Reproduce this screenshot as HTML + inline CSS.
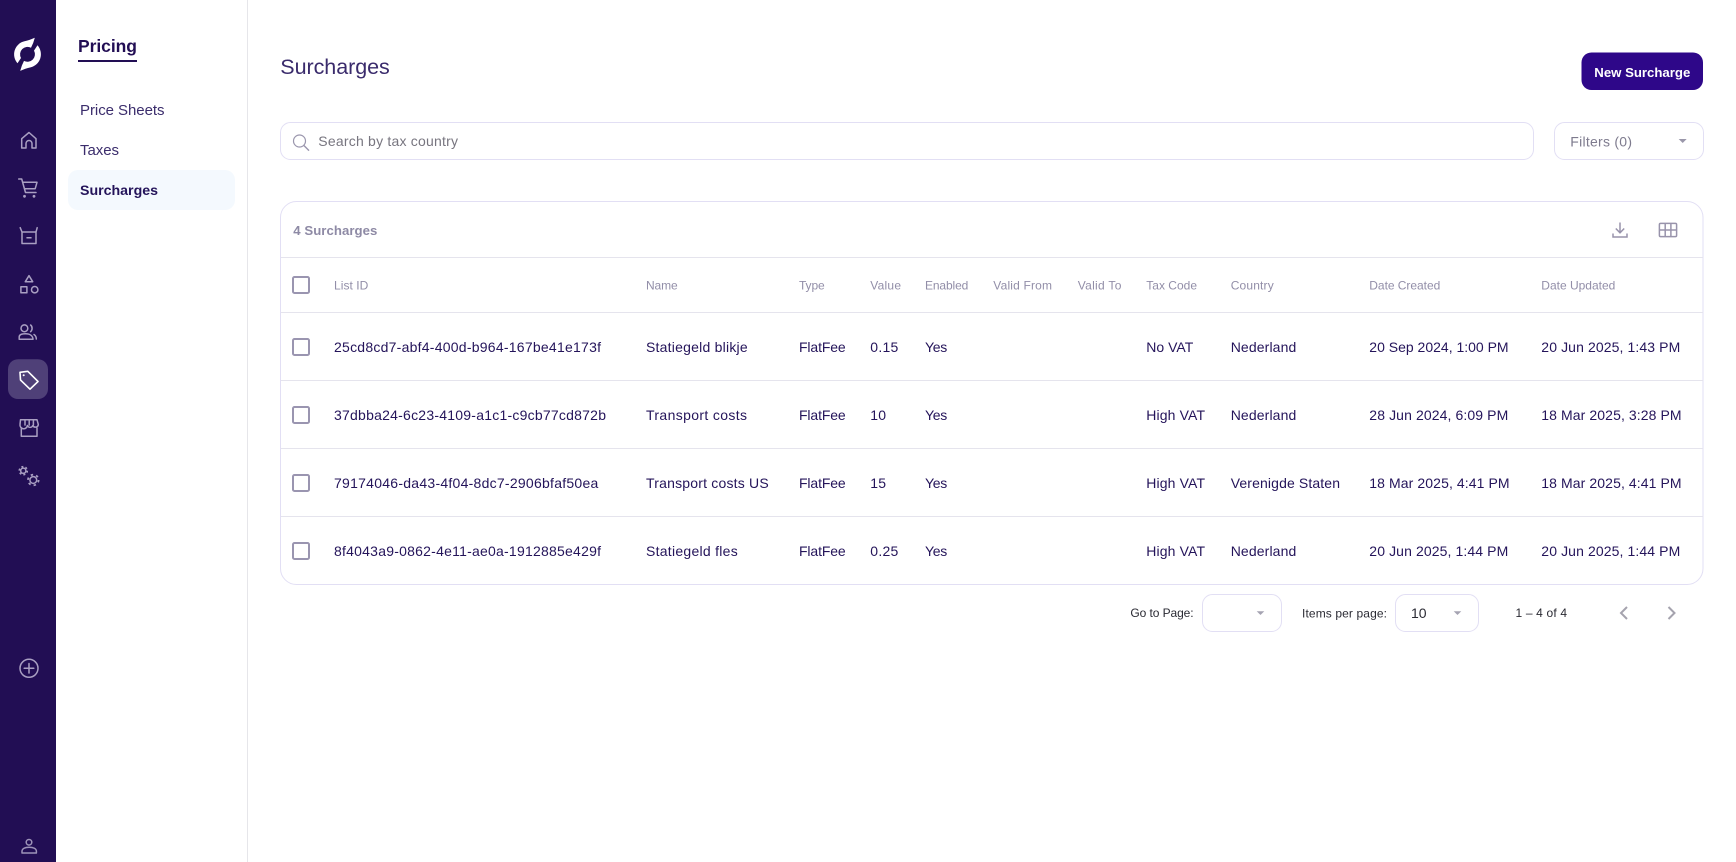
<!DOCTYPE html>
<html lang="en">
<head>
<meta charset="utf-8">
<title>Surcharges</title>
<style>
html,body{margin:0;padding:0;background:#fff;overflow:hidden}
svg{display:block}
text{font-family:"Liberation Sans",sans-serif;white-space:pre}
.d{font-size:14px;fill:#24145a}
.h{font-size:12px;fill:#928ea8}
.ic{fill:none;stroke:#a99fc2;stroke-width:1.5;stroke-linecap:round;stroke-linejoin:round}
.box{fill:#fff;stroke:#e2dff4;stroke-width:1}
.ln{stroke:#e5e4ed;stroke-width:1}
.cb{fill:#fff;stroke:#9a95b0;stroke-width:2}
.p{font-size:12px;fill:#2a2a33}
</style>
</head>
<body>
<svg xmlns="http://www.w3.org/2000/svg" width="1736" height="862" viewBox="0 0 1736 862">
<rect width="1736" height="862" fill="#fff"/>

<!-- rail -->
<rect width="56" height="862" fill="#220e54"/>
<g fill="#fff">
<path d="M34.8 37.7C31 39.5 28 40.3 24.5 41.2A13.5 13.5 0 0 0 17.5 63.3L21 58A7.5 7.5 0 0 1 31 47.7Q33.5 43 34.8 37.7Z"/>
<path d="M34.8 37.7C31 39.5 28 40.3 24.5 41.2A13.5 13.5 0 0 0 17.5 63.3L21 58A7.5 7.5 0 0 1 31 47.7Q33.5 43 34.8 37.7Z" transform="rotate(180 27.5 54.3)"/>
</g>
<g class="ic">
<path d="M21.7 148V138.7L29 132.5L36 138.7V148H32V143.5A3 3 0 0 0 26 143.5V148Z"/>
<path d="M18.7 179H21.7L25.5 192.5H36"/>
<path d="M23 182.3H37L35.2 188.7H25"/>
<path d="M22 232H36V243.5H22ZM20.2 227.7L22 232M37.2 227.7L36 232M27 237.7H31"/>
<path d="M29 275.7L32.7 281.7H25.3Z"/>
<rect x="20.9" y="286.7" width="6" height="6"/>
<circle cx="34.7" cy="289.7" r="3.2"/>
<circle cx="24.4" cy="328.3" r="3.4"/>
<path d="M19.2 339.3V337C19.2 335 21.5 333.8 25.5 333.8C29.5 333.8 32.8 335.5 33 339.3Z"/>
<path d="M30.6 325C32.6 326.5 32.6 330 30.6 331.7"/>
<path d="M34 334.5C35.5 335.5 36.3 337 36.3 339"/>
<path d="M20.5 419.8H37L38.3 424.5A2.9 2.9 0 0 1 32.8 425.5A2.9 2.9 0 0 1 27.4 425.5A2.9 2.9 0 0 1 20 424.5ZM21.3 428V436.2H37V428M25 420V425M29.2 420V425M33.4 420V425"/>
<circle cx="23.3" cy="470.7" r="2.6"/>
<circle cx="23.3" cy="470.7" r="4" stroke-dasharray="2 2.19" stroke-linecap="butt" stroke-width="1.6"/>
<circle cx="33.3" cy="480" r="3.4"/>
<circle cx="33.3" cy="480" r="5.3" stroke-dasharray="2.4 3.15" stroke-linecap="butt" stroke-width="1.8"/>
<circle cx="29" cy="668.3" r="9"/>
<path d="M29 663.5V673M24.2 668.3H33.8"/>
<circle cx="29" cy="842.3" r="2.8" stroke="#9d93b8"/>
<path d="M22 853V851.3C22 848.7 25 847.2 29.2 847.2C33.4 847.2 36.4 848.7 36.4 851.3V853Z" stroke="#9d93b8"/>
</g>
<g fill="#a99fc2"><circle cx="24.5" cy="196.3" r="1.4"/><circle cx="34" cy="196.3" r="1.4"/></g>
<rect x="8" y="359.2" width="40" height="39.8" rx="10" fill="#4f4078"/>
<path d="M20 372.3L27.8 371.3L38 381.5L30 389.2L20.5 380Z" fill="none" stroke="#fff" stroke-width="1.6" stroke-linejoin="round"/>
<circle cx="23.7" cy="375.2" r="1" fill="#fff"/>

<!-- secondary nav -->
<rect x="247" y="0" width="1" height="862" fill="#e6e6ea"/>
<text x="78" y="52" font-size="17.5" font-weight="700" fill="#220e54" textLength="59" lengthAdjust="spacing">Pricing</text>
<rect x="78" y="60" width="59" height="2" fill="#220e54"/>
<text x="80" y="115" font-size="15" fill="#3b2d6c" textLength="84.5" lengthAdjust="spacing">Price Sheets</text>
<text x="80" y="155" font-size="15" fill="#3b2d6c" textLength="39" lengthAdjust="spacing">Taxes</text>
<rect x="68" y="170" width="167" height="40" rx="10" fill="#f4f9fe"/>
<text x="80" y="195" font-size="14.2" font-weight="700" fill="#24145a" textLength="78" lengthAdjust="spacing">Surcharges</text>

<!-- header -->
<text x="280.3" y="74" font-size="21.5" fill="#3a2b6c" textLength="109.5" lengthAdjust="spacing">Surcharges</text>
<rect x="1581.5" y="52.5" width="121.5" height="37.5" rx="10" fill="#2e0789"/>
<text x="1594.3" y="77" font-size="13.2" font-weight="700" fill="#fff" textLength="96" lengthAdjust="spacing">New Surcharge</text>

<!-- search + filter -->
<rect class="box" x="280.5" y="122.5" width="1253" height="37" rx="10"/>
<circle cx="299.5" cy="141" r="6" fill="none" stroke="#9a96ad" stroke-width="1.2"/>
<path d="M303.8 145.4L309 150.6" stroke="#9a96ad" stroke-width="1.4" fill="none"/>
<text x="318.3" y="146" font-size="14" fill="#77757f" textLength="139.7" lengthAdjust="spacing">Search by tax country</text>
<rect class="box" x="1554.5" y="122.5" width="149" height="37" rx="10"/>
<text x="1570.3" y="146.3" font-size="14" fill="#7e7b8e" textLength="61.7" lengthAdjust="spacing">Filters (0)</text>
<path d="M1678.7 139H1686.7L1682.7 143Z" fill="#9a97aa"/>

<!-- card -->
<rect class="box" x="280.5" y="201.5" width="1422.5" height="383" rx="16"/>
<text x="293.3" y="235" font-size="13.2" font-weight="700" fill="#8e8aa5" textLength="84" lengthAdjust="spacing">4 Surcharges</text>
<g fill="none" stroke="#9893ab" stroke-width="1.5">
<path d="M1620 222.5V232.5M1615.8 228.5L1620 232.8L1624.2 228.5"/>
<path d="M1613 233.5V237H1627V233.5"/>
<rect x="1659.4" y="223.4" width="17.2" height="13.2" rx="1.2"/>
<path d="M1665.2 223.4V236.6M1670.9 223.4V236.6M1659.4 230H1676.6"/>
</g>
<path class="ln" d="M281 257.5H1703M281 312.5H1703M281 380.5H1703M281 448.5H1703M281 516.5H1703"/>

<!-- table head -->
<rect class="cb" x="293" y="277" width="16" height="16" rx="1.5"/>
<text class="h" x="334" y="289.3" textLength="34.3" lengthAdjust="spacing">List ID</text>
<text class="h" x="646" y="289.3" textLength="31.7" lengthAdjust="spacing">Name</text>
<text class="h" x="799" y="289.3" textLength="25.7" lengthAdjust="spacing">Type</text>
<text class="h" x="870.3" y="289.3" textLength="30.7" lengthAdjust="spacing">Value</text>
<text class="h" x="925" y="289.3" textLength="43.3" lengthAdjust="spacing">Enabled</text>
<text class="h" x="993.3" y="289.3" textLength="58.7" lengthAdjust="spacing">Valid From</text>
<text class="h" x="1077.7" y="289.3" textLength="43.7" lengthAdjust="spacing">Valid To</text>
<text class="h" x="1146.3" y="289.3" textLength="50.7" lengthAdjust="spacing">Tax Code</text>
<text class="h" x="1230.7" y="289.3" textLength="43" lengthAdjust="spacing">Country</text>
<text class="h" x="1369.3" y="289.3" textLength="71" lengthAdjust="spacing">Date Created</text>
<text class="h" x="1541.3" y="289.3" textLength="74" lengthAdjust="spacing">Date Updated</text>

<!-- row 1 -->
<rect class="cb" x="293" y="339" width="16" height="16" rx="1.5"/>
<text class="d" x="334" y="352" textLength="267" lengthAdjust="spacing">25cd8cd7-abf4-400d-b964-167be41e173f</text>
<text class="d" x="646" y="352" textLength="101.7" lengthAdjust="spacing">Statiegeld blikje</text>
<text class="d" x="799" y="352" textLength="46.7" lengthAdjust="spacing">FlatFee</text>
<text class="d" x="870.3" y="352" textLength="28" lengthAdjust="spacing">0.15</text>
<text class="d" x="925" y="352" textLength="22.3" lengthAdjust="spacing">Yes</text>
<text class="d" x="1146.3" y="352" textLength="47" lengthAdjust="spacing">No VAT</text>
<text class="d" x="1230.7" y="352" textLength="65.6" lengthAdjust="spacing">Nederland</text>
<text class="d" x="1369.3" y="352" textLength="139.3" lengthAdjust="spacing">20 Sep 2024, 1:00 PM</text>
<text class="d" x="1541.3" y="352" textLength="139" lengthAdjust="spacing">20 Jun 2025, 1:43 PM</text>

<!-- row 2 -->
<rect class="cb" x="293" y="407" width="16" height="16" rx="1.5"/>
<text class="d" x="334" y="420" textLength="272" lengthAdjust="spacing">37dbba24-6c23-4109-a1c1-c9cb77cd872b</text>
<text class="d" x="646" y="420" textLength="101" lengthAdjust="spacing">Transport costs</text>
<text class="d" x="799" y="420" textLength="46.7" lengthAdjust="spacing">FlatFee</text>
<text class="d" x="870.3" y="420" textLength="15.7" lengthAdjust="spacing">10</text>
<text class="d" x="925" y="420" textLength="22.3" lengthAdjust="spacing">Yes</text>
<text class="d" x="1146.3" y="420" textLength="58.7" lengthAdjust="spacing">High VAT</text>
<text class="d" x="1230.7" y="420" textLength="65.6" lengthAdjust="spacing">Nederland</text>
<text class="d" x="1369.3" y="420" textLength="139" lengthAdjust="spacing">28 Jun 2024, 6:09 PM</text>
<text class="d" x="1541.3" y="420" textLength="140.3" lengthAdjust="spacing">18 Mar 2025, 3:28 PM</text>

<!-- row 3 -->
<rect class="cb" x="293" y="475" width="16" height="16" rx="1.5"/>
<text class="d" x="334" y="488" textLength="264.3" lengthAdjust="spacing">79174046-da43-4f04-8dc7-2906bfaf50ea</text>
<text class="d" x="646" y="488" textLength="122.7" lengthAdjust="spacing">Transport costs US</text>
<text class="d" x="799" y="488" textLength="46.7" lengthAdjust="spacing">FlatFee</text>
<text class="d" x="870.3" y="488" textLength="15.7" lengthAdjust="spacing">15</text>
<text class="d" x="925" y="488" textLength="22.3" lengthAdjust="spacing">Yes</text>
<text class="d" x="1146.3" y="488" textLength="58.7" lengthAdjust="spacing">High VAT</text>
<text class="d" x="1230.7" y="488" textLength="109.3" lengthAdjust="spacing">Verenigde Staten</text>
<text class="d" x="1369.3" y="488" textLength="140.3" lengthAdjust="spacing">18 Mar 2025, 4:41 PM</text>
<text class="d" x="1541.3" y="488" textLength="140.3" lengthAdjust="spacing">18 Mar 2025, 4:41 PM</text>

<!-- row 4 -->
<rect class="cb" x="293" y="543" width="16" height="16" rx="1.5"/>
<text class="d" x="334" y="556" textLength="267" lengthAdjust="spacing">8f4043a9-0862-4e11-ae0a-1912885e429f</text>
<text class="d" x="646" y="556" textLength="91.7" lengthAdjust="spacing">Statiegeld fles</text>
<text class="d" x="799" y="556" textLength="46.7" lengthAdjust="spacing">FlatFee</text>
<text class="d" x="870.3" y="556" textLength="28" lengthAdjust="spacing">0.25</text>
<text class="d" x="925" y="556" textLength="22.3" lengthAdjust="spacing">Yes</text>
<text class="d" x="1146.3" y="556" textLength="58.7" lengthAdjust="spacing">High VAT</text>
<text class="d" x="1230.7" y="556" textLength="65.6" lengthAdjust="spacing">Nederland</text>
<text class="d" x="1369.3" y="556" textLength="139" lengthAdjust="spacing">20 Jun 2025, 1:44 PM</text>
<text class="d" x="1541.3" y="556" textLength="139" lengthAdjust="spacing">20 Jun 2025, 1:44 PM</text>

<!-- pagination -->
<text class="p" x="1130.4" y="617" textLength="63.2" lengthAdjust="spacing">Go to Page:</text>
<rect class="box" x="1202.5" y="594.5" width="79" height="37" rx="10"/>
<path d="M1256.7 611.3H1264.3L1260.5 615Z" fill="#a5a3b2"/>
<text class="p" x="1302" y="617.5" textLength="85" lengthAdjust="spacing">Items per page:</text>
<rect class="box" x="1395.5" y="594.5" width="83" height="37" rx="10"/>
<text x="1411" y="618" font-size="14" fill="#2a2a33" textLength="15.5" lengthAdjust="spacing">10</text>
<path d="M1453.7 611.3H1461.3L1457.5 615Z" fill="#a5a3b2"/>
<text class="p" x="1515.5" y="617" textLength="51.5" lengthAdjust="spacing">1 – 4 of 4</text>
<path d="M1627 607L1621 613L1627 619" fill="none" stroke="#a5a3ae" stroke-width="2"/>
<path d="M1668.5 607L1674.5 613L1668.5 619" fill="none" stroke="#a5a3ae" stroke-width="2"/>
</svg>
</body>
</html>
